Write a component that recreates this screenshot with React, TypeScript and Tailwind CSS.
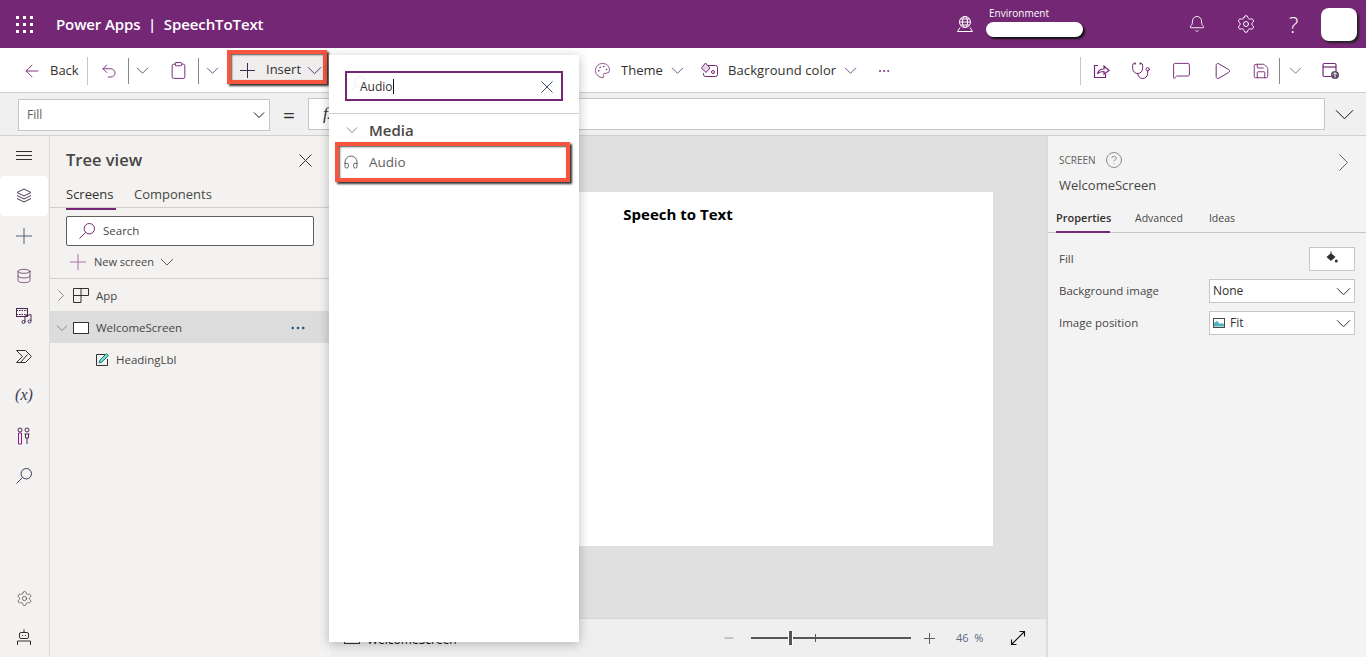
import {
  ArrowLeft,
  Bell,
  Clipboard,
  Database,
  Headphones,
  HelpCircle,
  MoreHorizontal,
  Palette,
  Play,
  Save,
  Settings,
  Stethoscope,
  Undo2,
  Minus,
  MessageSquare,
} from "lucide-react";

const purple = "text-[#742774]";

function Chevron({ size, className }: { size: number; className?: string }) {
  const half = size / 2;
  const drop = half - 1;
  const top = half - drop / 2;
  return (
    <svg width={size} height={size} viewBox={`0 0 ${size} ${size}`} fill="none" stroke="currentColor" strokeWidth="1" className={`shrink-0 ${className ?? ""}`}>
      <path d={`M1 ${top}L${half} ${top + drop}L${size - 1} ${top}`} />
    </svg>
  );
}

function ChevronSide({ width, height, className }: { width: number; height: number; className?: string }) {
  return (
    <svg width={width} height={height} viewBox={`0 0 ${width} ${height}`} fill="none" stroke="currentColor" strokeWidth="1" className={`shrink-0 ${className ?? ""}`}>
      <path d={`M0.5 0.5L${width - 0.5} ${height / 2}L0.5 ${height - 0.5}`} />
    </svg>
  );
}

function Cross({ size, className }: { size: number; className?: string }) {
  const half = size / 2;
  return (
    <svg width={size} height={size} viewBox={`0 0 ${size} ${size}`} fill="none" stroke="currentColor" strokeWidth="1" className={`shrink-0 ${className ?? ""}`}>
      <path d={`M0 ${half}H${size}M${half} 0V${size}`} />
    </svg>
  );
}

function Close({ size, className }: { size: number; className?: string }) {
  return (
    <svg width={size} height={size} viewBox={`0 0 ${size} ${size}`} fill="none" stroke="currentColor" strokeWidth="1" className={`shrink-0 ${className ?? ""}`}>
      <path d={`M0.5 0.5L${size - 0.5} ${size - 0.5}M${size - 0.5} 0.5L0.5 ${size - 0.5}`} />
    </svg>
  );
}

function Magnifier({ className }: { className?: string }) {
  return (
    <svg width="16" height="16" viewBox="0 0 16 16" fill="none" stroke="currentColor" strokeWidth="1" className={`shrink-0 ${className ?? ""}`}>
      <circle cx="10.300" cy="5.700" r="5.200" />
      <path d="M6.600 9.400 0.500 15.500" />
    </svg>
  );
}

function Divider({ className }: { className: string }) {
  return <div className={`w-px h-[26px] bg-[#8a8886] shrink-0 ${className}`} />;
}

function Hamburger() {
  return (
    <svg width="16" height="10" viewBox="0 0 16 10" fill="none" stroke="#323130" strokeWidth="1">
      <path d="M0 0.500h16M0 4.500h16M0 8.500h16" />
    </svg>
  );
}

function Layers() {
  return (
    <svg width="16" height="16" viewBox="0 0 16 16" fill="none" stroke="#4a3a55" strokeWidth="1">
      <path d="M8 1 15 4.500 8 8 1 4.500z" />
      <path d="M1 7.500 8 11l7-3.500" />
      <path d="M1 10.500 8 14l7-3.500" />
    </svg>
  );
}

function MediaIcon() {
  return (
    <svg width="16" height="16" viewBox="0 0 16 16" fill="none" stroke="#4a2a55" strokeWidth="1">
      <rect x="0.500" y="0.500" width="11" height="8" />
      <path d="M0.500 2.500h11M0.500 6.500h11" strokeDasharray="1.500 1" />
      <path d="M9 14V8l6-1.500V13" />
      <circle cx="7.500" cy="14" r="1.500" />
      <circle cx="13.500" cy="13.500" r="1.500" />
    </svg>
  );
}

function FlowIcon() {
  return (
    <svg width="16" height="13" viewBox="0 0 16 13" fill="none" stroke="#323130" strokeWidth="1">
      <path d="M0.500 0.500h9l6 6-6 6h-9l6-6z" />
      <path d="M4.500 12.500 11.500 4.500" />
    </svg>
  );
}

function ToolsIcon() {
  return (
    <svg width="14" height="18" viewBox="0 0 14 18" fill="none" strokeWidth="1">
      <path d="M1.500 6h3v11h-3z" stroke="#8a1c8a" />
      <circle cx="3" cy="3" r="2" stroke="#4a2a55" />
      <circle cx="10" cy="3" r="2" stroke="#4a2a55" />
      <path d="M7.500 7h5M8.500 7v4h3V7M10 11v6" stroke="#4a2a55" />
    </svg>
  );
}

function BotIcon() {
  return (
    <svg width="14" height="17" viewBox="0 0 14 17" fill="none" stroke="#323130" strokeWidth="1">
      <path d="M7 0.500v3" />
      <rect x="2.500" y="3.500" width="9" height="6" rx="1.500" />
      <path d="M5 6.500h1M8 6.500h1" />
      <path d="M0.500 16v-4h13v4" />
    </svg>
  );
}

function AppIcon() {
  return (
    <svg width="16" height="15" viewBox="0 0 16 15" fill="none" stroke="#323130" strokeWidth="1">
      <path d="M0.500 0.500h15v7h-7.500v7H0.500zM8 0.500v7M0.500 7.500H8" />
    </svg>
  );
}

function LabelIcon() {
  return (
    <svg width="14" height="14" viewBox="0 0 14 14" fill="none" strokeWidth="1">
      <path d="M10 1.500H1.500v11h11V6" stroke="#323130" />
      <path d="M4 10l1-3 6.500-6.500 2 2L7 9z" fill="#7fd0c8" stroke="#0f8a84" />
    </svg>
  );
}

function EnvironmentIcon() {
  return (
    <svg width="18" height="18" viewBox="0 0 18 18" fill="none" stroke="#fff" strokeWidth="1">
      <circle cx="9" cy="7" r="5.500" />
      <ellipse cx="9" cy="7" rx="2.500" ry="5.500" />
      <path d="M3.500 7h11M4.500 4h9M4.500 10h9" />
      <path d="M4 12.500 1.500 16.500h15L14 12.500" />
    </svg>
  );
}

function ShareIcon() {
  return (
    <svg width="17" height="16" viewBox="0 0 17 16" fill="none" stroke="#742774" strokeWidth="1.200">
      <path d="M5 2.500H1.500v12h11V11" />
      <path d="M4.500 11c.5-3 3-5 6.500-5V3l5 4.500L11 11V8.500c-2.500 0-5 .5-6.500 2.500z" />
    </svg>
  );
}

function PublishIcon() {
  return (
    <svg width="18" height="18" viewBox="0 0 18 18" fill="none">
      <path d="M9 14.500H2.500a1.500 1.500 0 0 1-1.500-1.500V3a1.500 1.500 0 0 1 1.500-1.500h10A1.500 1.500 0 0 1 14 3v6" stroke="#742774" strokeWidth="1.200" />
      <path d="M1 5h13" stroke="#742774" strokeWidth="1.200" />
      <circle cx="13" cy="13" r="4" fill="#5c4a66" />
      <path d="M13 15.500v-4.500M11 12.500l2-2 2 2" stroke="#fff" strokeWidth="1" />
    </svg>
  );
}

function BackgroundIcon() {
  return (
    <svg width="18" height="17" viewBox="0 0 18 17" fill="none" stroke="#742774" strokeWidth="1">
      <path d="M8 3.500h7.500a2 2 0 0 1 2 2v7a2 2 0 0 1-2 2h-10a2 2 0 0 1-2-2V11" />
      <path d="M5.500 1 10 6l-4 4.500L1.500 6z" fill="#e9d5e9" />
      <circle cx="13" cy="10" r="1.500" />
    </svg>
  );
}

function FillIcon() {
  return (
    <svg width="12" height="13" viewBox="0 0 12 13" fill="#323130">
      <path d="M4.500 0.500h1v2l4 3.500-4.500 4L0.500 6 4.500 2.500z" />
      <circle cx="10.300" cy="10" r="1.500" />
    </svg>
  );
}

function ImageIcon() {
  return (
    <svg width="12" height="10" viewBox="0 0 12 10">
      <rect x="0.500" y="0.500" width="11" height="9" fill="#fff" stroke="#4a4a4a" strokeWidth="1" />
      <path d="M1 8.500V5l3-2 3 3 2-1 2 1.500v2z" fill="#4fb3bf" />
    </svg>
  );
}

function ExpandIcon() {
  return (
    <svg width="16" height="16" viewBox="0 0 16 16" fill="none" stroke="#111" strokeWidth="1.100">
      <path d="M1.500 14.500 14.500 1.500M9.500 1.500h5v5M1.500 9.500v5h5" />
    </svg>
  );
}

function RailIcon({ children, active, className }: { children: React.ReactNode; active?: boolean; className?: string }) {
  return (
    <div className={`h-10 w-12 flex items-center justify-center rounded-sm ${active ? "bg-white" : ""} ${className ?? ""}`}>
      {children}
    </div>
  );
}

function TreeRow({ children, active }: { children: React.ReactNode; active?: boolean }) {
  return (
    <div className={`h-8 pt-[1px] flex items-center text-[11.500px] text-[#484644] ${active ? "bg-[#dcdcdc]" : ""}`}>{children}</div>
  );
}

function PropRow({ label, children }: { label: string; children: React.ReactNode }) {
  return (
    <div className="h-8 flex items-center justify-between pl-[11px] pr-[11px] text-[11.500px] text-[#484644]">
      <span>{label}</span>
      {children}
    </div>
  );
}

function PropSelect({ children }: { children: React.ReactNode }) {
  return (
    <div className="w-[146px] h-6 bg-white border border-[#c8c6c4] flex items-center pl-[3px] pr-[3px] text-[12px] text-[#323130]">
      <div className="flex-1 flex items-center gap-[5px]">{children}</div>
      <Chevron size={15} className="text-[#323130]" />
    </div>
  );
}

export default function App() {
  return (
    <div className="relative w-[1366px] h-[657px] overflow-hidden flex flex-col bg-white font-['Open_Sans','Noto_Sans',sans-serif] text-[#323130]">
      {/* app bar */}
      <header className="h-12 shrink-0 bg-[#742774] text-white flex items-center">
        <div className="ml-[16px] grid grid-cols-3 gap-[4px]">
          {Array.from({ length: 9 }).map((_, i) => (
            <span key={i} className="w-[3px] h-[3px] bg-white" />
          ))}
        </div>
        <div className="ml-[23px] w-[208px] whitespace-nowrap text-[15px] font-semibold tracking-[-0.1px]">Power Apps&nbsp; |&nbsp; SpeechToText</div>
        <div className="ml-[692px]"><EnvironmentIcon /></div>
        <div className="ml-[12px] flex flex-col -mt-[5px]">
          <span className="text-[10px] leading-[14px] ml-[3px]">Environment</span>
          <div className="w-[97px] h-[15px] mt-[2px] rounded-full bg-white shadow-[2px_2px_2px_#111]" />
        </div>
        <Bell size={18} strokeWidth={1.200} className="ml-[105px]" />
        <Settings size={20} strokeWidth={1.200} className="ml-[30px]" />
        <span className="ml-[33px] text-[22px] font-light leading-none">?</span>
        <div className="ml-[23px] w-9 h-[33px] rounded-[8px] bg-white shadow-[2px_2px_2px_#222]" />
      </header>

      {/* command bar */}
      <div className="h-[45px] shrink-0 pt-[1px] bg-white border-b border-[#d2d0ce] flex items-center text-[13px]">
        <ArrowLeft size={20} strokeWidth={1.100} className="ml-[22px] text-[#742774]" />
        <span className="ml-[8px] w-[30px]">Back</span>
        <div className="ml-[7px] w-px h-7 bg-[#c8c6c4]" />
        <Undo2 size={18} strokeWidth={1.200} className={`ml-[12px] ${purple}`} />
        <Divider className="ml-[10px]" />
        <Chevron size={13} className="ml-[7px] text-[#6a5a8c]" />
        <Clipboard size={19} strokeWidth={1.200} className={`ml-[20px] ${purple}`} />
        <Divider className="ml-[10px]" />
        <Chevron size={13} className="ml-[7px] text-[#6a5a8c]" />
        <div className="ml-[8px] -mt-[7px] w-[100px] h-[34px] shrink-0 border-[4px] border-[#f8553f] bg-[#f0eeec] shadow-[2px_2px_2px_#333,inset_1px_1px_2px_#555] flex items-center pt-[6px]">
          <Cross size={15} className="ml-[9px] text-[#3d2a55]" />
          <span className="ml-[11px] w-[36px]">Insert</span>
          <Chevron size={15} className="ml-[5px] text-[#5c2e7e]" />
        </div>
        <Palette size={17} strokeWidth={1.100} className={`ml-[267px] ${purple}`} />
        <span className="ml-[10px] w-[43px]">Theme</span>
        <Chevron size={13} className="ml-[7px] text-[#6a5a8c]" />
        <div className="ml-[16px]"><BackgroundIcon /></div>
        <span className="ml-[10px] w-[110px] whitespace-nowrap tracking-[0.1px]">Background color</span>
        <Chevron size={13} className="ml-[6px] text-[#6a5a8c]" />
        <MoreHorizontal size={14} strokeWidth={1.500} className={`ml-[20px] ${purple}`} />
        <div className="ml-[189px] w-px h-7 bg-[#c8c6c4]" />
        <div className="ml-[12px]"><ShareIcon /></div>
        <Stethoscope size={20} strokeWidth={1.200} className={`ml-[21px] ${purple}`} />
        <MessageSquare size={19} strokeWidth={1.200} className={`ml-[21px] ${purple}`} />
        <Play size={20} strokeWidth={1.200} className={`ml-[21px] ${purple}`} />
        <Save size={18} strokeWidth={1.200} className={`ml-[20px] ${purple}`} />
        <Divider className="ml-[9px]" />
        <Chevron size={13} className="ml-[9px] text-[#5c86a6]" />
        <div className="ml-[20px]"><PublishIcon /></div>
      </div>

      {/* formula bar */}
      <div className="h-[43px] shrink-0 bg-[#f0f0f0] border-b border-[#d2d0ce] flex items-center">
        <div className="ml-[18px] mt-[2px] w-[252px] h-[32px] bg-white border border-[#c8c6c4] flex items-center justify-between pl-2 pr-[4px] text-[12px] text-[#605e5c]">
          <span>Fill</span>
          <Chevron size={12} className="text-[#111]" />
        </div>
        <span className="ml-[13px] mt-[3px] w-[25px] text-[21px] leading-none text-[#323130]">=</span>
        <div className="w-[1017px] h-[32px] bg-white border border-[#c8c6c4] flex items-center pl-[14px] font-['Liberation_Serif',serif] italic text-[17px]">
          <span>fx</span>
        </div>
        <Chevron size={19} className="ml-[10px] text-[#111]" />
      </div>

      <div className="flex-1 flex min-h-0">
        {/* left rail */}
        <nav className="w-[50px] shrink-0 bg-[#f3f2f1] border-r border-[#dcdcdc] flex flex-col">
          <RailIcon><Hamburger /></RailIcon>
          <RailIcon active><Layers /></RailIcon>
          <RailIcon><Cross size={16} className="text-[#52606e]" /></RailIcon>
          <RailIcon><Database size={16} strokeWidth={1.100} className="text-[#5c2355]" /></RailIcon>
          <RailIcon><MediaIcon /></RailIcon>
          <RailIcon><FlowIcon /></RailIcon>
          <RailIcon><span className="-mt-[3px] font-['Liberation_Serif',serif] italic text-[16px] text-[#3a3a50]">(x)</span></RailIcon>
          <RailIcon><ToolsIcon /></RailIcon>
          <RailIcon><Magnifier className="text-[#3a3a60]" /></RailIcon>
          <RailIcon className="mt-auto -mb-[1px]"><Settings size={17} strokeWidth={1} className="text-[#484644]" /></RailIcon>
          <RailIcon><BotIcon /></RailIcon>
        </nav>

        {/* tree view */}
        <aside className="w-[280px] shrink-0 bg-[#f3f2f1] flex flex-col">
          <div className="h-[72px] shrink-0 border-b border-[#d2d0ce] px-4 flex flex-col">
            <div className="flex items-center justify-between pt-[12px]">
              <span className="text-[16.500px] leading-[24px] font-semibold text-[#484644]">Tree view</span>
              <Close size={13} className="mr-[2px] text-[#323130]" />
            </div>
            <div className="flex gap-[18px] text-[13px] mt-[12px] leading-[20px]">
              <span className="border-b-2 border-[#742774] h-[26px] w-[50px]">Screens</span>
              <span className="text-[#484644]">Components</span>
            </div>
          </div>
          <div className="h-[71px] shrink-0 border-b border-[#d2d0ce] px-4">
            <div className="mt-[8px] w-[248px] h-[30px] bg-white border border-[#605e5c] rounded-[2px] flex items-center pl-[12px] text-[11.500px] text-[#484644]">
              <Magnifier className="text-[#742774]" />
              <span className="ml-[8px]">Search</span>
            </div>
            <div className="mt-[6px] h-[20px] flex items-center pl-[4px] text-[11px] text-[#484644]">
              <Cross size={16} className="text-[#a86fa8]" />
              <span className="ml-[8px]">New screen</span>
              <Chevron size={14} className="ml-[6px] text-[#605e5c]" />
            </div>
          </div>
          <TreeRow>
            <ChevronSide width={6} height={11} className="ml-[8px] text-[#8a8886]" />
            <div className="ml-[9px]"><AppIcon /></div>
            <span className="ml-[7px]">App</span>
          </TreeRow>
          <TreeRow active>
            <Chevron size={12} className="ml-[6px] text-[#8a8886]" />
            <div className="ml-[5px] w-4 h-[12px] border border-[#323130] bg-white" />
            <span className="ml-[7px] flex-1">WelcomeScreen</span>
            <MoreHorizontal size={18} strokeWidth={1.500} className="mr-[23px] text-[#2b4a7a]" />
          </TreeRow>
          <TreeRow>
            <div className="ml-[45px]"><LabelIcon /></div>
            <span className="ml-[7px]">HeadingLbl</span>
          </TreeRow>
        </aside>

        {/* canvas */}
        <main className="flex-1 min-w-0 flex flex-col bg-[#e0e0e0]">
          <div className="flex-1 pt-[56px] pl-[33px]">
            <div className="w-[630px] h-[354px] bg-white text-center pt-[11px] font-bold text-[15px] text-black">
              Speech to Text
            </div>
          </div>
          <div className="h-[39px] shrink-0 bg-[#efefef] border-t border-[#d8d8d8] flex items-center text-[#605e5c]">
            <div className="ml-[14px] w-4 h-[12px] border border-[#323130] bg-white" />
            <span className="ml-[7px] mt-[4px] w-[83px] text-[12px] text-[#111]">WelcomeScreen</span>
            <Minus size={14} strokeWidth={1} className="ml-[272px]" />
            <div className="relative ml-[15px] w-[160px] h-[2px] bg-[#555]">
              <div className="absolute left-[37px] -top-[6px] w-[3px] h-[14px] bg-[#555] border-x border-white box-content" />
              <div className="absolute left-[64px] -top-[3px] w-px h-[8px] bg-[#555]" />
            </div>
            <Cross size={11} className="ml-[13px]" />
            <span className="ml-[21px] text-[11px] text-[#5a6a80] whitespace-pre">46  %</span>
            <div className="ml-[27px]"><ExpandIcon /></div>
          </div>
        </main>

        {/* properties */}
        <aside className="w-[320px] shrink-0 bg-[#f3f3f3] border-l-2 border-[#dcdcdc] flex flex-col">
          <div className="h-[72px] shrink-0 pl-[11px] pr-[18px]">
            <div className="flex items-center pt-[11px] h-[36px] text-[10px] text-[#605e5c] leading-[18px]">
              <span>SCREEN</span>
              <HelpCircle size={18} strokeWidth={0.900} className="ml-[9px]" />
              <ChevronSide width={9} height={17} className="ml-auto mt-[6px] text-[#605e5c]" />
            </div>
            <div className="text-[13px] leading-[18px] mt-[4px] text-[#484644]">WelcomeScreen</div>
          </div>
          <div className="h-[25px] shrink-0 border-b border-[#c8c6c4] flex pl-[8px] text-[10.500px] text-[#484644] gap-[25px] leading-[20px]">
            <span className="h-[25px] border-b-2 border-[#742774] font-semibold text-[11px] text-[#323130] w-[54px] whitespace-nowrap">Properties</span>
            <span>Advanced</span>
            <span className="ml-[1px]">Ideas</span>
          </div>
          <div className="pt-[10px]">
            <PropRow label="Fill">
              <div className="w-[46px] h-6 bg-white border border-[#c8c6c4] flex justify-center pt-[3px]">
                <FillIcon />
              </div>
            </PropRow>
            <PropRow label="Background image">
              <PropSelect>None</PropSelect>
            </PropRow>
            <PropRow label="Image position">
              <PropSelect><ImageIcon />Fit</PropSelect>
            </PropRow>
          </div>
        </aside>
      </div>

      {/* insert flyout */}
      <div className="absolute left-[329px] top-[55px] w-[250px] h-[587px] bg-white shadow-[0_2px_10px_rgba(0,0,0,0.25)] flex flex-col">
        <div className="h-[59px] shrink-0 border-b border-[#d2d0ce] pl-[16px] pt-[16px]">
          <div className="relative w-[218px] h-[30px] border-2 border-[#742774] flex items-center pl-[13px] pr-[8px] pt-[1px] text-[12px]">
            <Magnifier className="absolute left-[3px] top-[3px] text-[#ececec]" />
            <span className="relative">Audio</span>
            <span className="relative w-px h-[15px] bg-[#111]" />
            <Close size={12} className="ml-auto text-[#3d4f6a]" />
          </div>
        </div>
        <div className="h-[26px] mt-[3px] flex items-center">
          <Chevron size={12} className="ml-[17px] text-[#8a8886]" />
          <span className="ml-[11px] text-[15px] font-semibold text-[#484644]">Media</span>
        </div>
        <div className="ml-[6px] -mt-[1px] w-[235px] h-[40px] shrink-0 border-[4px] border-[#f8553f] bg-white shadow-[2px_2px_2px_#333,inset_1px_1px_2px_#555] flex items-center text-[13.500px] text-[#605e5c]">
          <Headphones size={16} strokeWidth={1.100} className="ml-[4px] text-[#323130]" />
          <span className="ml-[10px]">Audio</span>
        </div>
      </div>
    </div>
  );
}
